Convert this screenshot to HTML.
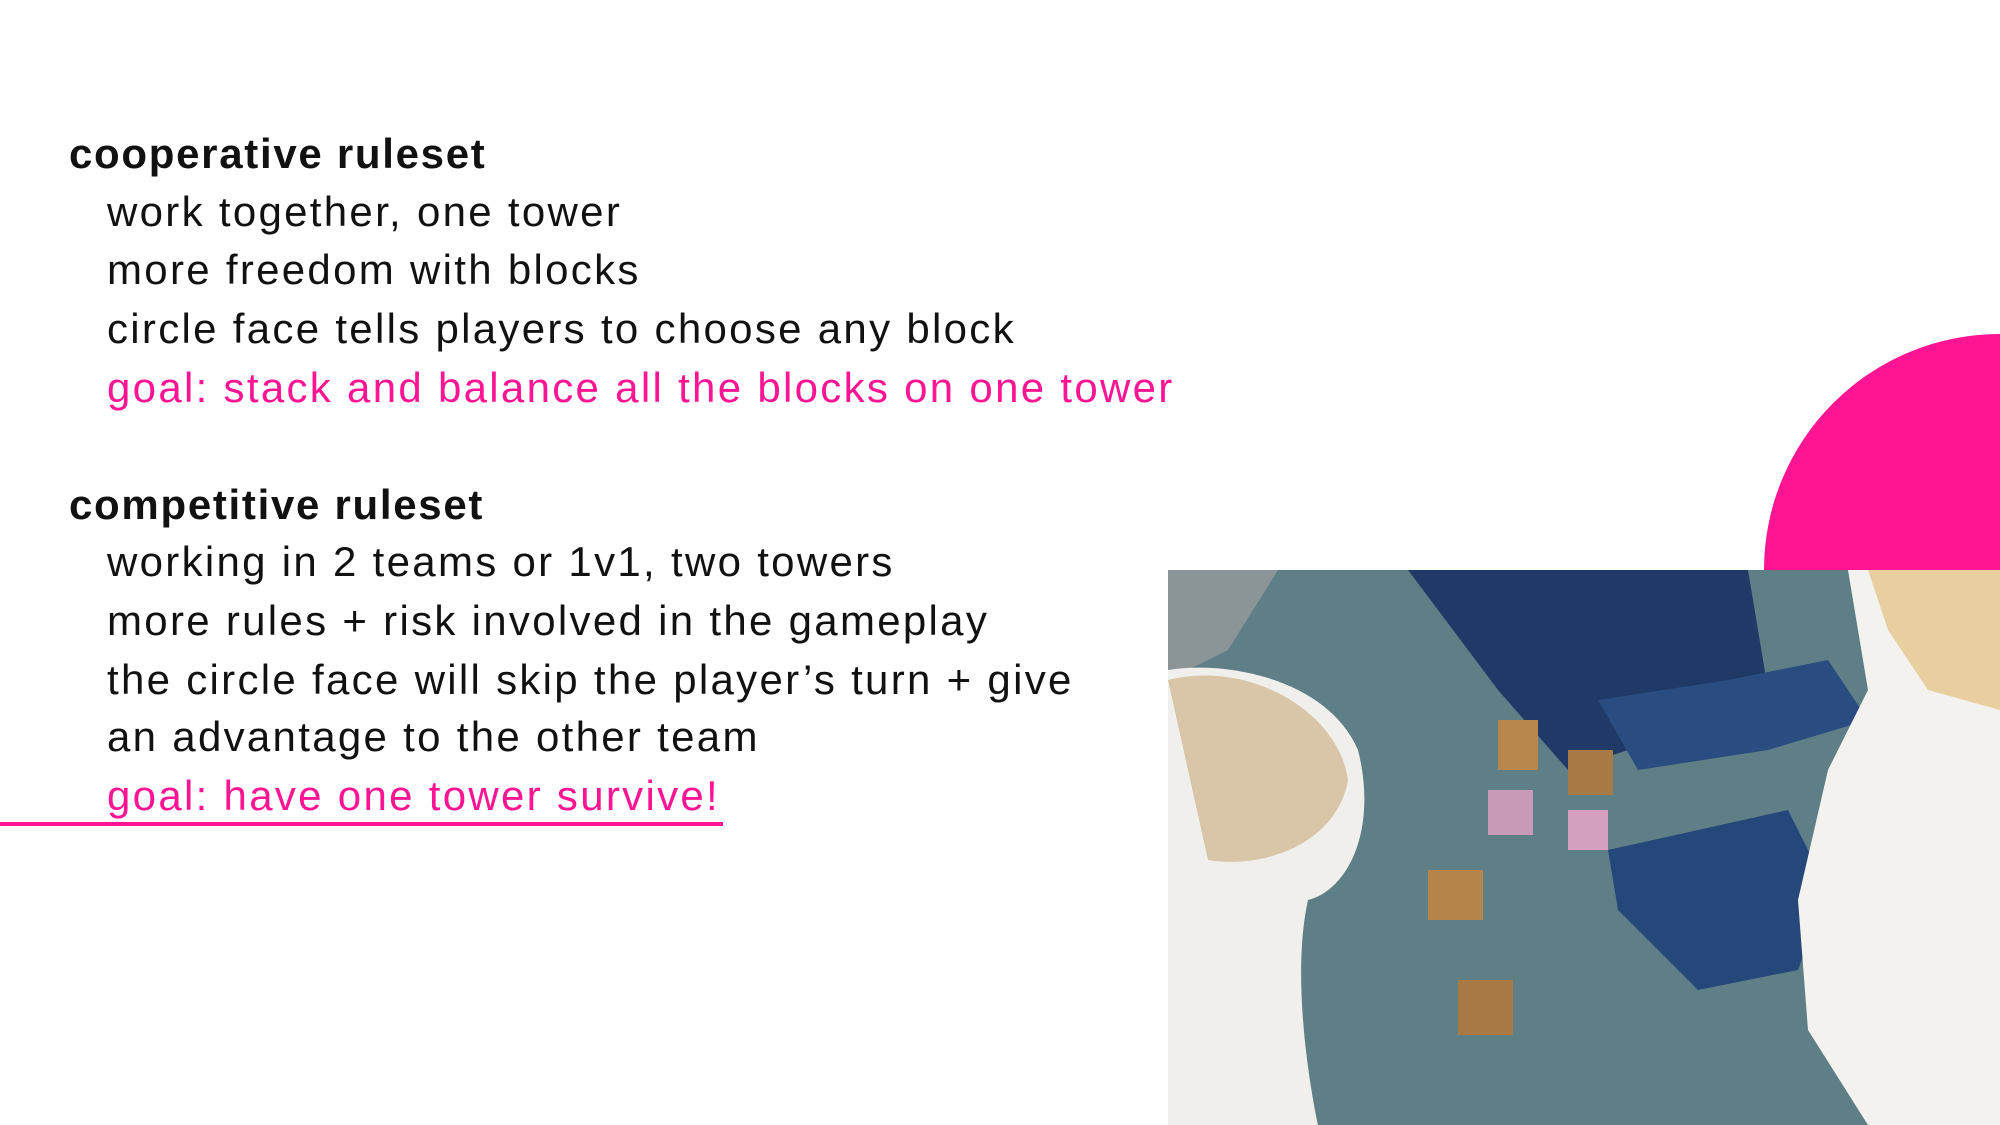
<!DOCTYPE html>
<html><head><meta charset="utf-8"><style>
html,body{margin:0;padding:0;width:2000px;height:1125px;background:#fff;overflow:hidden;position:relative;font-family:"Liberation Sans",sans-serif}
.t{position:absolute;font-size:42px;line-height:50px;color:#111;white-space:nowrap;letter-spacing:2.3px}
.h{font-weight:bold;letter-spacing:1.7px;left:69px}
.i{left:107px}
.p{color:#ff1493}
</style></head><body>
<div class="t h" style="top:129px">cooperative ruleset</div>
<div class="t i" style="top:187px">work together, one tower</div>
<div class="t i" style="top:245px">more freedom with blocks</div>
<div class="t i" style="top:304px">circle face tells players to choose any block</div>
<div class="t i p" style="top:363px">goal: stack and balance all the blocks on one tower</div>
<div class="t h" style="top:480px">competitive ruleset</div>
<div class="t i" style="top:537px">working in 2 teams or 1v1, two towers</div>
<div class="t i" style="top:596px">more rules + risk involved in the gameplay</div>
<div class="t i" style="top:655px">the circle face will skip the player’s turn + give</div>
<div class="t i" style="top:712px">an advantage to the other team</div>
<div class="t i p" style="top:771px">goal: have one tower survive!</div>
<div style="position:absolute;left:0;top:822px;width:723px;height:4px;background:#ff1493"></div>
<div style="position:absolute;left:1764px;top:334px;width:472px;height:472px;border-radius:50%;background:#ff1493"></div>
<svg style="position:absolute;left:1168px;top:570px" width="832" height="555" viewBox="0 0 832 555">
<rect width="832" height="555" fill="#5f7f86"/>
<path d="M0 0H110L60 80 0 110Z" fill="#8b9497"/>
<path d="M240 0H580L600 120 520 160 400 200 330 120Z" fill="#1f3a66"/>
<path d="M430 130 560 110 660 90 700 150 600 180 470 200Z" fill="#2a4c80"/>
<path d="M440 280 620 240 660 320 630 400 530 420 450 340Z" fill="#26477a"/>
<path d="M680 0H832V555H700L640 460 630 330 660 200 700 120Z" fill="#f4f2ee"/>
<path d="M700 0H832V140L760 120 720 60Z" fill="#e8cfa0"/>
<path d="M0 100C60 90 160 110 190 180 210 260 180 320 140 330 120 420 150 555 150 555H0Z" fill="#f1efec"/>
<path d="M0 110C80 90 170 140 180 210 170 270 100 300 40 290 0 280Z" fill="#d9c6a8"/>
<rect x="330" y="150" width="40" height="50" fill="#b8874e"/>
<rect x="400" y="180" width="45" height="45" fill="#a87a45"/>
<rect x="320" y="220" width="45" height="45" fill="#c79bb8"/>
<rect x="260" y="300" width="55" height="50" fill="#b5844a"/>
<rect x="290" y="410" width="55" height="55" fill="#a97a44"/>
<rect x="400" y="240" width="40" height="40" fill="#d4a0c0"/>
</svg>
</body></html>
